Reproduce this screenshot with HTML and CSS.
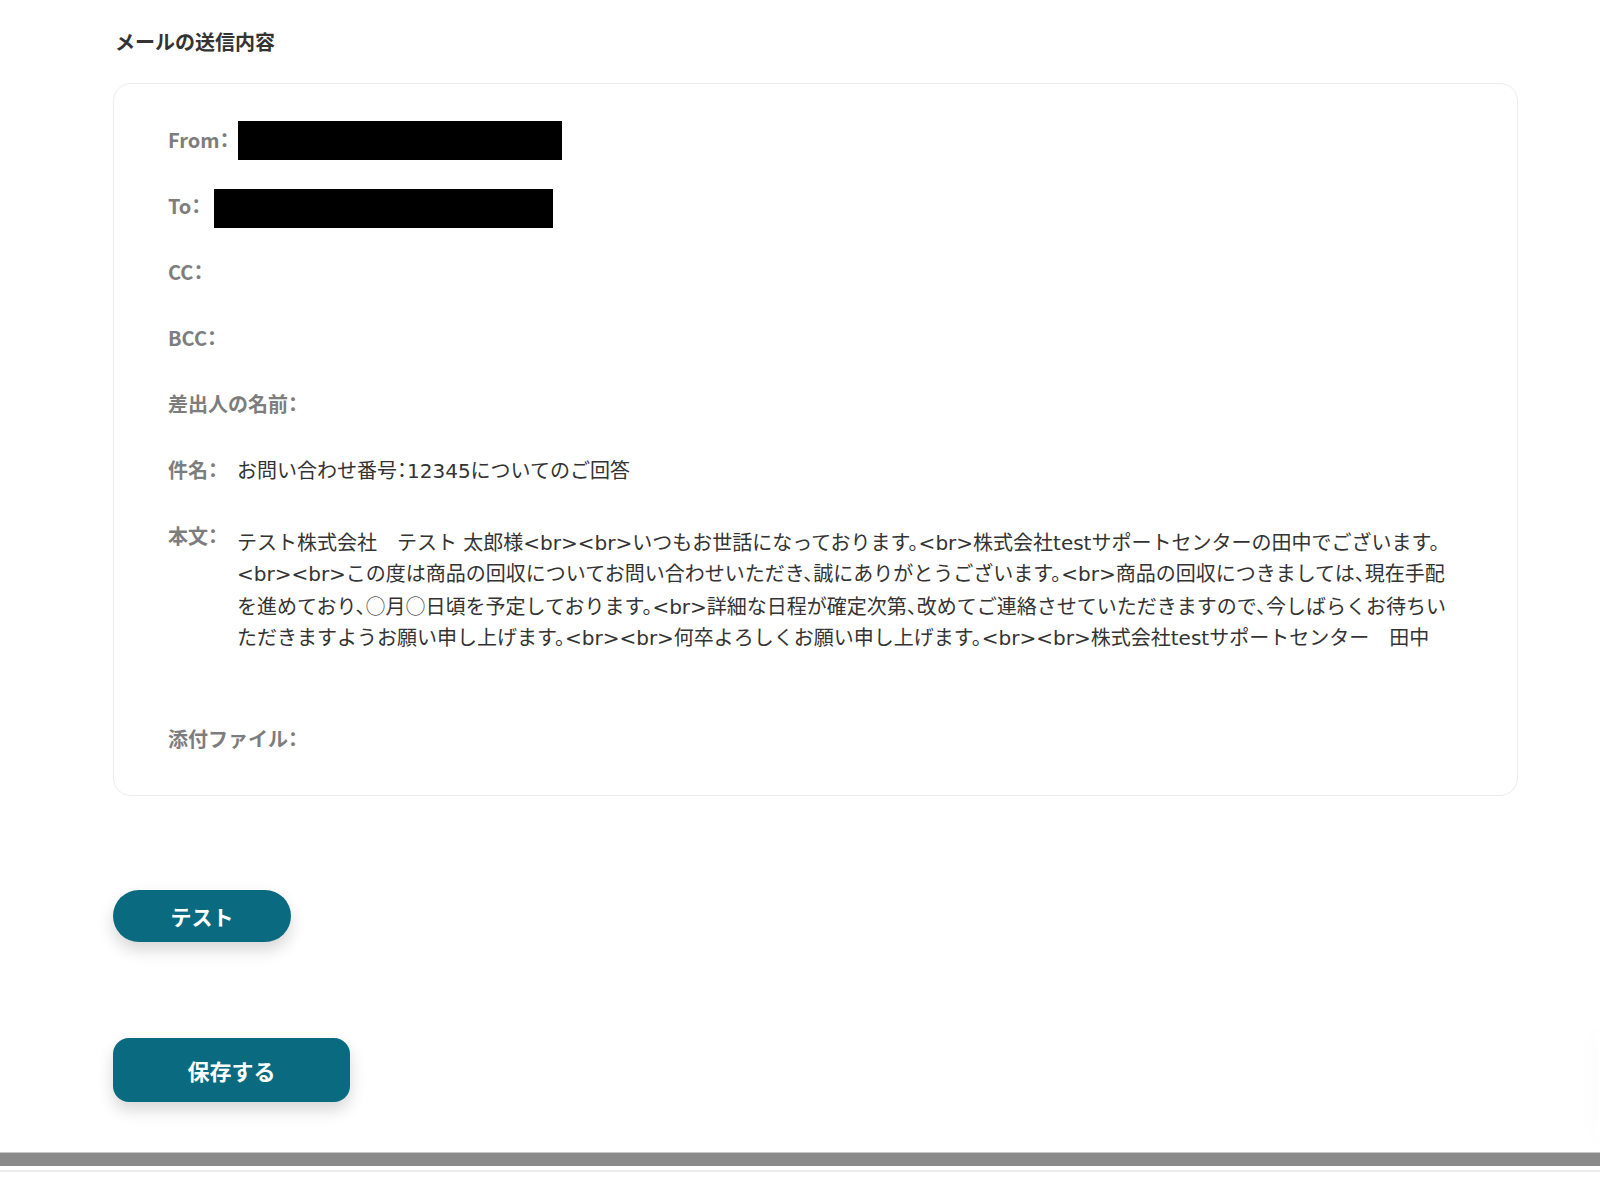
FILE: index.html
```html
<!DOCTYPE html>
<html lang="ja">
<head>
    <meta charset="UTF-8">
    <meta name="viewport" content="width=device-width, initial-scale=1.0">
    <title>メールの送信内容</title>
    <link rel="stylesheet" href="styles.css">
</head>
<body>

    <div class="page">
        <h2 class="title">メールの送信内容</h2>

        <div class="card">
            <div class="row">
                <span class="label">From：</span>
                <span class="redact redact-from"></span>
            </div>
            <div class="row">
                <span class="label">To：</span>
                <span class="redact redact-to"></span>
            </div>
            <div class="row">
                <span class="label">CC：</span>
            </div>
            <div class="row">
                <span class="label">BCC：</span>
            </div>
            <div class="row">
                <span class="label">差出人の名前：</span>
            </div>
            <div class="row">
                <span class="label">件名：</span>
                <span class="value">お問い合わせ番号：12345についてのご回答</span>
            </div>
            <div class="row row-body">
                <span class="label">本文：</span>
                <div class="value body-text">テスト株式会社　テスト 太郎様&lt;br&gt;&lt;br&gt;いつもお世話になっております。&lt;br&gt;株式会社testサポートセンターの田中でございます。&lt;br&gt;&lt;br&gt;この度は商品の回収についてお問い合わせいただき、誠にありがとうございます。&lt;br&gt;商品の回収につきましては、現在手配を進めており、<span class="cjk">○</span>月<span class="cjk">○</span>日頃を予定しております。&lt;br&gt;詳細な日程が確定次第、改めてご連絡させていただきますので、今しばらくお待ちいただきますようお願い申し上げます。&lt;br&gt;&lt;br&gt;何卒よろしくお願い申し上げます。&lt;br&gt;&lt;br&gt;株式会社testサポートセンター　田中</div>
            </div>
            <div class="row">
                <span class="label">添付ファイル：</span>
            </div>
        </div>

        <button class="btn btn-test">テスト</button>
        <button class="btn btn-save">保存する</button>
    </div>

    <div class="footer-bar"></div>
    <div class="footer-line"></div>

    <div class="side-fab"></div>

</body>
</html>
```

FILE: styles.css
```css
* {
    box-sizing: border-box;
    margin: 0;
    padding: 0;
}

html, body {
    overflow: hidden;
}

body {
    position: relative;
    background-color: #fff;
    font-family: "Noto Sans CJK JP", "Noto Sans", sans-serif;
    color: #333;
    height: 1177px;
}

.page {
    padding: 28px 0 50px 113px;
}

.title {
    font-size: 20px;
    line-height: 28px;
    font-weight: 700;
    color: #333;
    margin-left: 2px;
    margin-bottom: 27px;
}

.card {
    width: 1405px;
    background: #fff;
    border: 1px solid #ececec;
    border-radius: 18px;
    padding: 36px 54px 36px 54px;
    display: flex;
    flex-direction: column;
    gap: 26px;
}

.row {
    display: flex;
    align-items: center;
    height: 40px;
}

.row-body {
    align-items: flex-start;
    height: auto;
}

.label {
    font-size: 20px;
    line-height: 40px;
    font-weight: 700;
    font-feature-settings: "halt";
    color: #7d7d7d;
    white-space: nowrap;
}

.value {
    margin-left: 19px;
    padding-top: 3px;
    font-family: "DejaVu Sans", "Noto Sans CJK JP", sans-serif;
    font-feature-settings: "halt";
    font-size: 20px;
    line-height: 31px;
    color: #333;
}

.cjk {
    font-family: "Noto Sans CJK JP", sans-serif;
    font-feature-settings: normal;
    color: #555;
}

.body-text {
    width: 1222px;
    padding: 12px 0 39px;
}

.redact {
    display: inline-block;
    height: 39px;
    background: #000;
}

.redact-from {
    width: 324px;
    margin-left: 8px;
}

.redact-to {
    width: 339px;
    margin-left: 13px;
    position: relative;
    top: 2px;
}

.btn {
    display: block;
    border: none;
    background: #0a6a80;
    color: #fff;
    font-family: "Noto Sans CJK JP", sans-serif;
    font-weight: 700;
    cursor: pointer;
    box-shadow: 0 8px 16px rgba(0, 0, 0, 0.16);
}

.btn-test {
    margin-top: 94px;
    width: 178px;
    height: 52px;
    border-radius: 26px;
    font-size: 21px;
    line-height: 48px;
}

.btn-save {
    margin-top: 96px;
    width: 237px;
    height: 64px;
    border-radius: 16px;
    font-size: 22px;
    line-height: 58px;
}

.footer-bar {
    height: 14px;
    background: #8a8a8a;
    border-top: 1px solid #c6c6c6;
}

.footer-line {
    margin-top: 4px;
    height: 2px;
    background: #ededed;
}

.side-fab {
    position: absolute;
    top: 1030px;
    right: 0;
    width: 3px;
    height: 110px;
    border-radius: 3px 0 0 3px;
    background: #fff;
    box-shadow: 0 0 22px rgba(0, 0, 0, 0.08);
}
```
